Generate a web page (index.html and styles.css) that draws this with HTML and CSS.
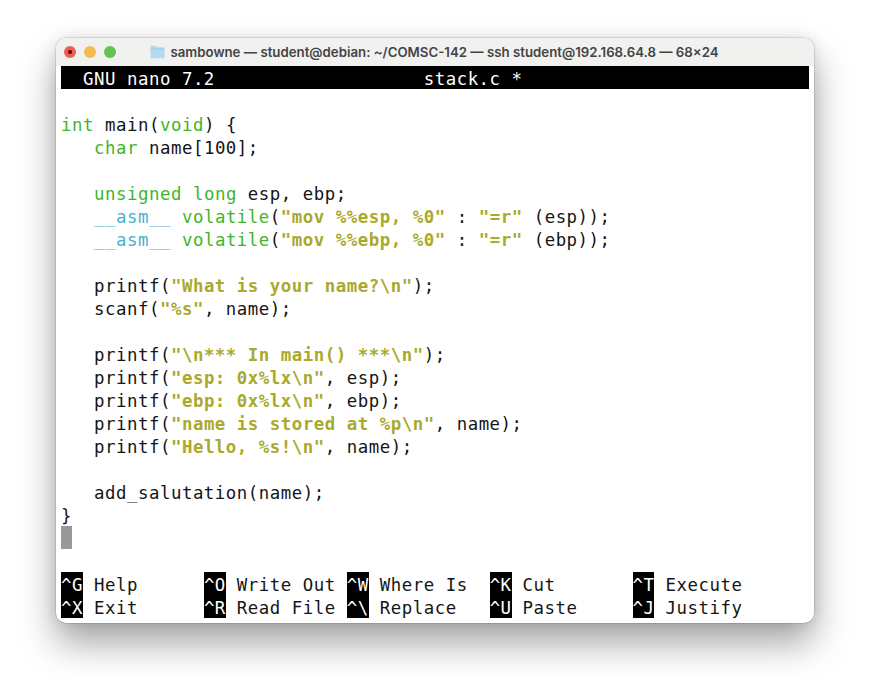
FILE: index.html
```html
<!DOCTYPE html>
<html lang="en">
<head>
<meta charset="utf-8">
<title>nano</title>
<link rel="stylesheet" href="styles.css">
</head>
<body>
<div class="window">
  <div class="titlebar">
    <div class="lights"><span class="light red"><i></i></span><span class="light yellow"></span><span class="light green"></span></div>
    <svg class="folder" viewBox="0 0 15 14" width="15" height="14"><path d="M.5 2.2C.5 1.3 1 .8 1.9.8h3.4c.5 0 .8.2 1.1.5l.8.9h6c.9 0 1.4.5 1.4 1.4v8.3c0 .9-.5 1.4-1.4 1.4H1.9c-.9 0-1.4-.5-1.4-1.4z" fill="#b4d9f2"/><path d="M.5 4h14" stroke="#8fc3e8" stroke-width=".8"/></svg>
    <span class="title">sambowne — student@debian: ~/COMSC-142 — ssh student@192.168.64.8 — 68×24</span>
  </div>
  <div class="term">
<div class="line head">  GNU nano 7.2                   stack.c *</div>
<div class="line"></div>
<div class="line"><span class="k">int</span> main(<span class="k">void</span>) {</div>
<div class="line">   <span class="k">char</span> name[100];</div>
<div class="line"></div>
<div class="line">   <span class="k">unsigned</span> <span class="k">long</span> esp, ebp;</div>
<div class="line">   <span class="c">__asm__</span> <span class="k">volatile</span>(<span class="s">"mov %%esp, %0"</span> : <span class="s">"=r"</span> (esp));</div>
<div class="line">   <span class="c">__asm__</span> <span class="k">volatile</span>(<span class="s">"mov %%ebp, %0"</span> : <span class="s">"=r"</span> (ebp));</div>
<div class="line"></div>
<div class="line">   printf(<span class="s">"What is your name?\n"</span>);</div>
<div class="line">   scanf(<span class="s">"%s"</span>, name);</div>
<div class="line"></div>
<div class="line">   printf(<span class="s">"\n*** In main() ***\n"</span>);</div>
<div class="line">   printf(<span class="s">"esp: 0x%lx\n"</span>, esp);</div>
<div class="line">   printf(<span class="s">"ebp: 0x%lx\n"</span>, ebp);</div>
<div class="line">   printf(<span class="s">"name is stored at %p\n"</span>, name);</div>
<div class="line">   printf(<span class="s">"Hello, %s!\n"</span>, name);</div>
<div class="line"></div>
<div class="line">   add_salutation(name);</div>
<div class="line">}</div>
<div class="line"><span class="cursor"> </span></div>
<div class="line"></div>
<div class="line"><span class="key">^G</span> Help      <span class="key">^O</span> Write Out <span class="key">^W</span> Where Is  <span class="key">^K</span> Cut       <span class="key">^T</span> Execute</div>
<div class="line"><span class="key">^X</span> Exit      <span class="key">^R</span> Read File <span class="key">^\</span> Replace   <span class="key">^U</span> Paste     <span class="key">^J</span> Justify</div>
  </div>
</div>
</body>
</html>
```
FILE: styles.css
```css
html, body { margin: 0; padding: 0; background: #fff; }
body { width: 870px; height: 697px; overflow: hidden; padding-top: 38px; box-sizing: border-box; }
.window {
  margin-left: 56px;
  width: 758px;
  height: 585px;
  border-radius: 10px;
  overflow: hidden;
  background: #fff;
  box-shadow: 0 0 0 .5px rgba(0,0,0,.2), 0 20px 36px rgba(0,0,0,.36), 0 0 14px rgba(0,0,0,.1);
  display: flex;
  flex-direction: column;
}
.titlebar {
  height: 28px;
  flex: none;
  background: #f1f1f0;
  position: relative;
  display: flex;
  align-items: center;
  justify-content: center;
  gap: 5px;
  padding-right: 1px;
  box-sizing: border-box;
}
.lights { position: absolute; left: 8px; top: 8px; display: flex; gap: 8px; }
.light { width: 12px; height: 12px; border-radius: 50%; display: flex; align-items: center; justify-content: center; }
.light i { width: 3.5px; height: 3.5px; border-radius: 50%; background: #5c0d0a; }
.red { background: #ec5f56; }
.yellow { background: #f4bd4f; }
.green { background: #61c454; }
.folder { flex: none; }
.title { font: 600 13.25px Inter, "Liberation Sans", sans-serif; color: #444; white-space: nowrap; }
.term { padding: 0 5px; flex: 1; }
.line {
  height: 23px;
  line-height: 27px;
  font-family: "DejaVu Sans Mono", monospace;
  font-size: 17.4px;
  letter-spacing: .52px;
  white-space: pre;
  color: #151515;
}
.head { background: #000; color: #fff; }
.k { color: #3fb52c; }
.c { color: #45b4c9; }
.s { color: #a9a92c; font-weight: bold; }
.key { background: #000; color: #fff; display: inline-block; height: 23px; vertical-align: top; overflow: hidden; }
.cursor { background: #999; display: inline-block; height: 23px; width: 11px; vertical-align: top; }
```
